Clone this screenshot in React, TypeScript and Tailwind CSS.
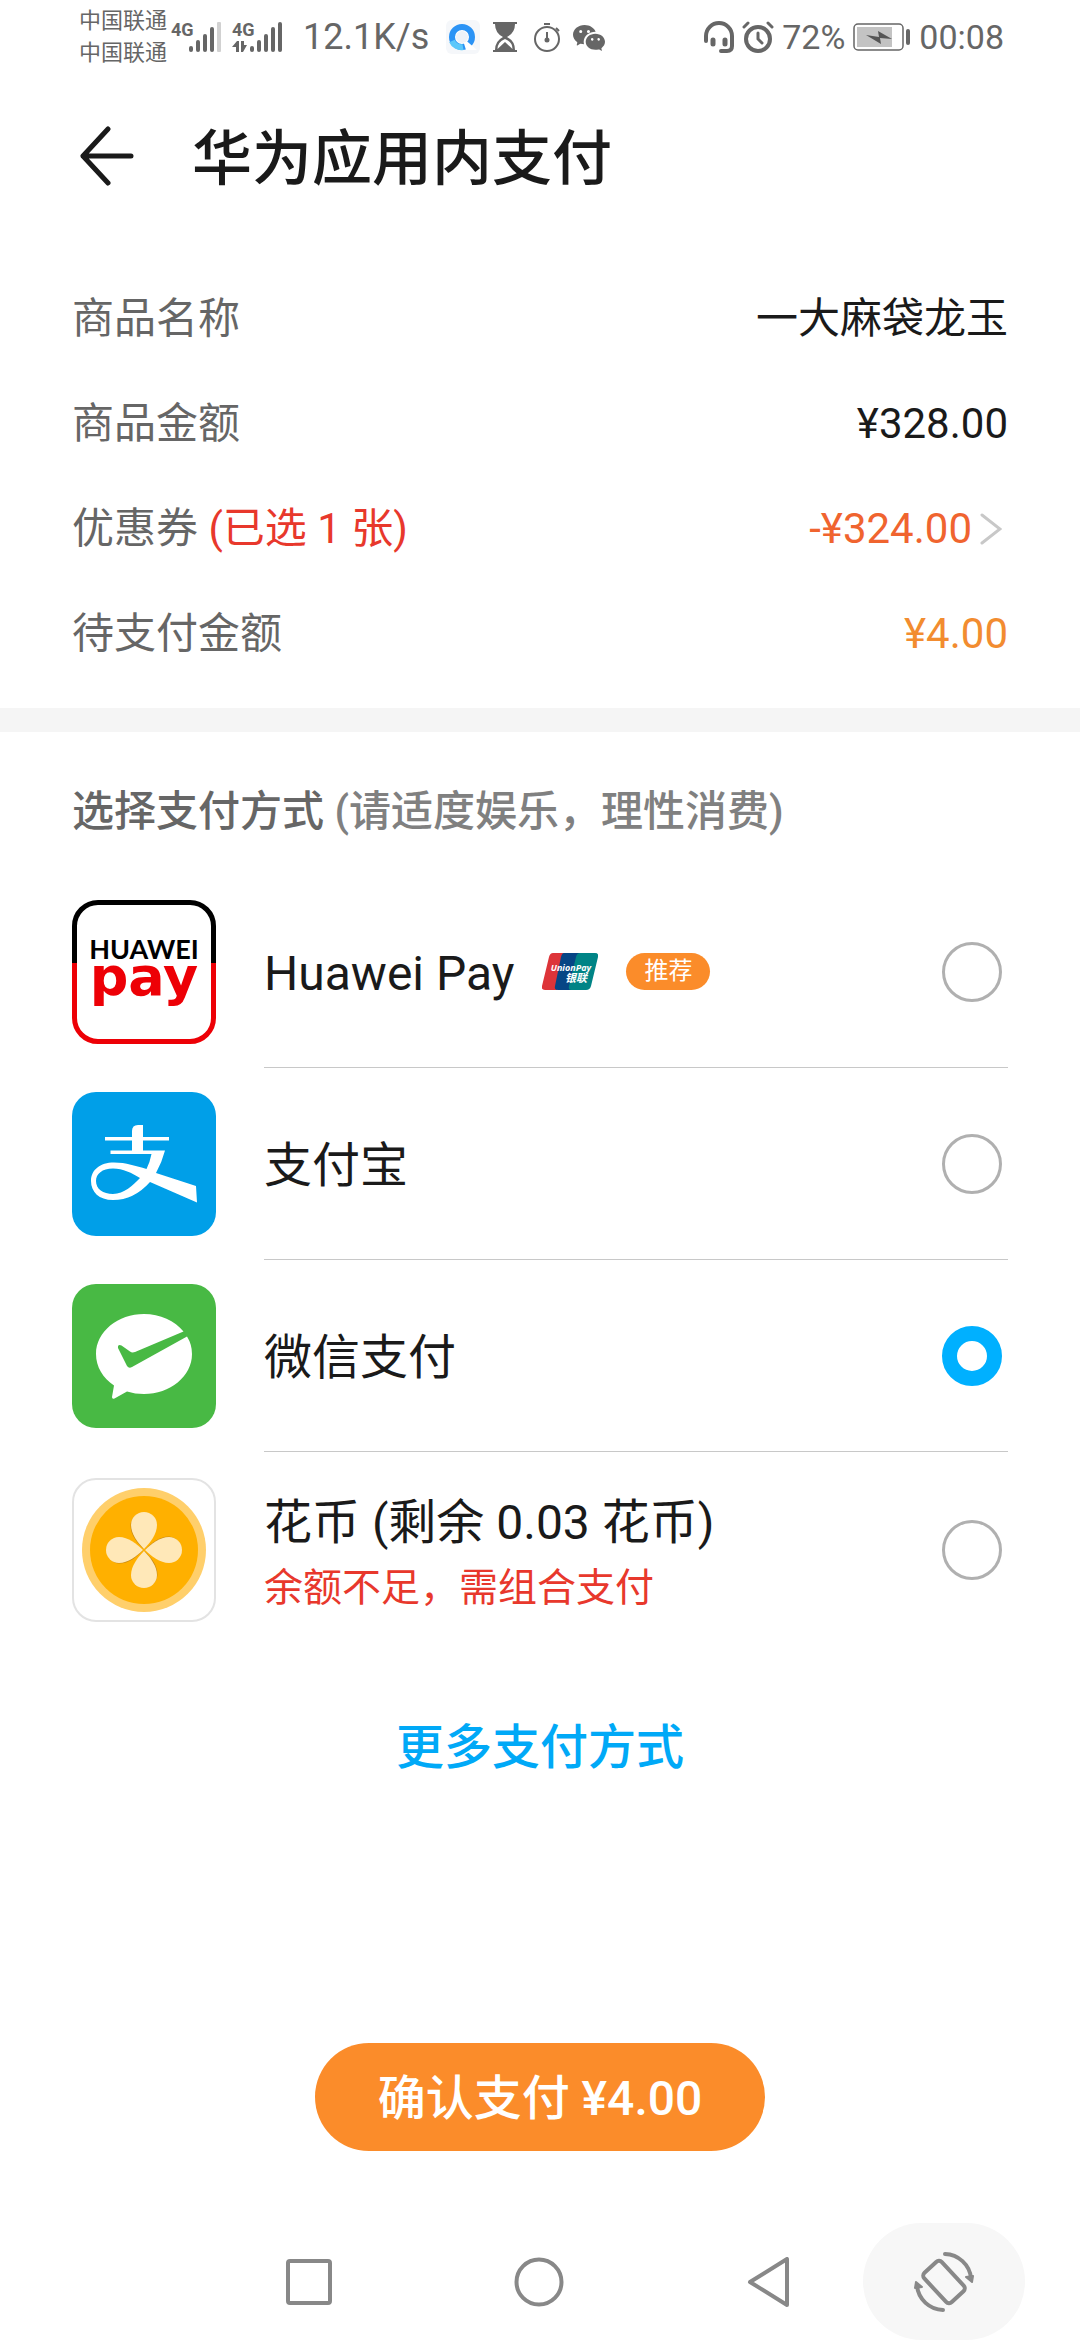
import { useState } from 'react';
import type { ReactNode } from 'react';
import { BsWechat } from 'react-icons/bs';

interface PaymentMethod {
  id: string;
  name: string;
  icon: ReactNode;
  note?: string;
  recommended?: boolean;
}

function HuaweiPayIcon() {
  return (
    <svg viewBox="0 0 144 144" className="size-36 shrink-0" aria-hidden="true">
      <path d="M2.5 63V26A23.5 23.5 0 0 1 26 2.5H118A23.5 23.5 0 0 1 141.5 26V63" fill="none" stroke="#000" strokeWidth="5" />
      <path d="M2.5 63V118A23.5 23.5 0 0 0 26 141.5H118A23.5 23.5 0 0 0 141.5 118V63" fill="none" stroke="#ed0006" strokeWidth="5" />
      <text textAnchor="middle" className="font-bold">
        <tspan x="72" y="59" className="fill-black font-['Lato',sans-serif] text-[27px]">
          HUAWEI
        </tspan>
        <tspan x="72" y="95" className="fill-[#ed0006] font-['DejaVu_Sans',sans-serif] text-[54px]">
          pay
        </tspan>
      </text>
    </svg>
  );
}

function AlipayIcon() {
  return (
    <svg viewBox="0 0 144 144" className="size-36 shrink-0" aria-hidden="true">
      <rect width="144" height="144" rx="24" fill="#009fe8" />
      <g fill="#fff">
        <path d="M60 59V39Q60 33 66 33H71V59Z" />
        <path d="M33 45H97V48.5H33Z" />
        <path d="M38.5 58.5H93Q90 70 84 81L124 94L125 110.500L78 90Q62 108 41 108C27 108 19 100 19 89C19 78 28 70.5 42 70.5C54 70.5 64 74 74.5 77Q78 70 79.5 62H38.5ZM68 86C60 81 51 76.5 41 76.5C30 76.5 24 82 24 89C24 97 31 102 41 102C52 102 61 93 68 86Z" fillRule="evenodd" />
      </g>
    </svg>
  );
}

function WechatPayIcon() {
  return (
    <svg viewBox="0 0 144 144" className="size-36 shrink-0" aria-hidden="true">
      <rect width="144" height="144" rx="24" fill="#48b944" />
      <path
        d="M72 30C46 30 24 47.5 24 70C24 83 31 94 42 101.5L40 113Q40 115.5 42.5 114.5L55 107.5Q63 110 72 110C98 110 120 92.5 120 70Q120 60.5 115 52.5L60 83Q57 85 55 82L46 64Q45.5 60 49.5 61.5L58 67.5Q60 69 63 68L111.5 47.5C103 37 88 30 72 30Z"
        fill="#fff"
      />
    </svg>
  );
}

function HuabiIcon() {
  return (
    <svg viewBox="0 0 144 144" className="size-36 shrink-0" aria-hidden="true">
      <rect x="1" y="1" width="142" height="142" rx="23" fill="#fff" stroke="#e3e3e3" strokeWidth="2" />
      <circle cx="72" cy="72" r="62" fill="#ffcf6b" />
      <circle cx="72" cy="72" r="54" fill="#ffb000" />
      {[0, 90, 180, 270].map((angle) => (
        <g key={angle} transform={`rotate(${angle} 72 72)`}>
          <path d="M72 71C65 65 58.500 57 58.500 47A13.500 13 0 0 1 72 35" fill="#c78a14" />
          <path d="M72 71C66 65 59 56 59 47A13 13 0 0 1 85 47C85 56 78 65 72 71Z" fill="#ffe8b8" />
        </g>
      ))}
    </svg>
  );
}

function UnionPayIcon() {
  return (
    <svg viewBox="0 0 56 37" className="h-[37px] w-14" role="img" aria-label="UnionPay">
      <path d="M11 0H24L15 37H3Q-1 37 0 33L7 4Q8 0 11 0Z" fill="#dd3439" />
      <path d="M22 0H38L29 37H16Q12 37 13 33L19 4Q20 0 22 0Z" fill="#064585" />
      <path d="M38 0H53Q57 0 56 4L49 33Q48 37 44 37H29Q26 37 27 33L34 4Q35 0 38 0Z" fill="#008486" />
      <text textAnchor="middle" className="fill-white font-bold italic">
        <tspan x="29" y="18" className="font-['Open_Sans',sans-serif] text-[9px]">
          UnionPay
        </tspan>
        <tspan x="34" y="29" className="font-['Noto_Sans_CJK_SC',sans-serif] text-[11px]">
          银联
        </tspan>
      </text>
    </svg>
  );
}

const methods: PaymentMethod[] = [
  { id: 'huawei', name: 'Huawei Pay', icon: <HuaweiPayIcon />, recommended: true },
  { id: 'alipay', name: '支付宝', icon: <AlipayIcon /> },
  { id: 'wechat', name: '微信支付', icon: <WechatPayIcon /> },
  { id: 'huabi', name: '花币 (剩余 0.03 花币)', icon: <HuabiIcon />, note: '余额不足，需组合支付' },
];

function StatusBar() {
  return (
    <div className="flex h-[74px] items-center justify-between pr-[76px] pl-[79px] text-[#666]">
      <div className="flex items-center">
        <div className="text-[22px] leading-8">
          <p>中国联通</p>
          <p>中国联通</p>
        </div>
        <svg viewBox="0 0 114 36" className="ml-1 h-9 w-[114px]" fill="currentColor" aria-hidden="true">
          <text x="0" y="17" className="font-['Liberation_Sans_Narrow','Roboto',sans-serif] text-[18px] font-bold">4G</text>
          <rect x="18" y="27" width="4" height="6" rx="2" />
          <rect x="25" y="21" width="4" height="12" rx="2" />
          <rect x="32" y="15" width="4" height="18" rx="2" />
          <rect x="39" y="8" width="4" height="25" rx="2" />
          <rect x="46" y="3" width="4" height="30" rx="1" opacity="0.3" />
          <text x="61" y="17" className="font-['Liberation_Sans_Narrow','Roboto',sans-serif] text-[18px] font-bold">4G</text>
          <path d="M61 28L66 22H68V33H65V28ZM70 22H73V26H76L72 33H70Z" />
          <rect x="79" y="27" width="4" height="6" rx="2" />
          <rect x="86" y="21" width="4" height="12" rx="2" />
          <rect x="93" y="15" width="4" height="18" rx="2" />
          <rect x="100" y="8" width="4" height="25" rx="2" />
          <rect x="107" y="3" width="4" height="30" rx="2" />
        </svg>
        <span className="ml-[18px] text-[36px] leading-none">12.1K/s</span>
        <svg viewBox="0 0 36 36" className="ml-4 size-9" aria-hidden="true">
          <rect x="1" y="1" width="34" height="34" rx="6" fill="#f5f7fa" />
          <circle cx="17" cy="18" r="10" fill="#fff" stroke="#2b93f5" strokeWidth="6" />
          <path d="M7 22A10 10 0 0 0 18 28" fill="none" stroke="#5cc8fa" strokeWidth="6" />
          <path d="M17 18L32 31H21Z" fill="#fff" />
          <circle cx="17" cy="18" r="6" fill="#eef2f8" />
        </svg>
        <svg viewBox="0 0 24 32" className="ml-3 h-8 w-6" fill="currentColor" aria-hidden="true">
          <path d="M0 1H24V3H22Q22 12 14 16Q22 20 22 29H24V31H0V29H2Q2 20 10 16Q2 12 2 3H0ZM12 18Q4.5 21 4.5 28L12 21L19.5 28Q19.5 21 12 18Z" fillRule="evenodd" />
        </svg>
        <svg viewBox="0 0 28 32" className="ml-4 h-8 w-7" fill="none" stroke="currentColor" strokeWidth="2" aria-hidden="true">
          <circle cx="14" cy="18" r="12" />
          <path d="M11 3H17M23 7L26 10M14 11V18" />
          <circle cx="14" cy="19" r="1.5" fill="currentColor" />
        </svg>
        <BsWechat className="ml-3 size-8" aria-hidden="true" />
      </div>
      <div className="flex items-center">
        <svg viewBox="0 0 30 32" className="h-8 w-[30px]" fill="none" stroke="currentColor" strokeWidth="4" strokeLinecap="round" aria-hidden="true">
          <path d="M2 20V15A13 13 0 0 1 28 15V25Q28 30 23 30H17" />
          <path d="M9 19V23M21 19V23" strokeWidth="5" />
        </svg>
        <svg viewBox="0 0 32 32" className="ml-2 h-8 w-8" fill="none" stroke="currentColor" strokeWidth="4" strokeLinecap="round" aria-hidden="true">
          <circle cx="16" cy="18" r="12" />
          <path d="M16 12V18L20 22M2 6L6 2M26 2L30 6" strokeWidth="3" />
        </svg>
        <span className="ml-2 text-[34px] leading-none">72%</span>
        <svg viewBox="0 0 58 28" className="ml-2 h-7 w-[58px]" aria-hidden="true">
          <rect x="1" y="1" width="49" height="26" rx="4" fill="none" stroke="currentColor" strokeWidth="1.5" />
          <rect x="4" y="4" width="35" height="20" fill="#c3c3c3" />
          <path d="M13 12L26 14L25 8L39 16L27 15L28 21Z" fill="#555" />
          <rect x="53" y="6" width="4" height="16" rx="2" fill="currentColor" />
        </svg>
        <span className="ml-2 text-[34px] leading-none">00:08</span>
      </div>
    </div>
  );
}

function OrderSummary() {
  return (
    <dl className="px-[72px] pt-6 pb-[22px] text-[42px] text-[#1a1a1a]">
      <div className="flex h-[105px] items-center justify-between">
        <dt className="text-[#666]">商品名称</dt>
        <dd>一大麻袋龙玉</dd>
      </div>
      <div className="flex h-[105px] items-center justify-between">
        <dt className="text-[#666]">商品金额</dt>
        <dd>¥328.00</dd>
      </div>
      <div className="flex h-[105px] items-center justify-between">
        <dt className="text-[#666]">
          优惠券 <span className="text-[#e8382c]">(已选 1 张)</span>
        </dt>
        <dd>
          <button type="button" className="flex items-center gap-2 pr-[6px] text-[#f0642f]">
            -¥324.00
            <svg viewBox="0 0 22 32" className="h-8 w-[22px]" fill="none" stroke="#c8c8c8" strokeWidth="3" strokeLinecap="round" aria-hidden="true">
              <path d="M2 2L20 16L2 30" />
            </svg>
          </button>
        </dd>
      </div>
      <div className="flex h-[105px] items-center justify-between">
        <dt className="text-[#666]">待支付金额</dt>
        <dd className="text-[#f28c30]">¥4.00</dd>
      </div>
    </dl>
  );
}

interface MethodRowProps {
  method: PaymentMethod;
  checked: boolean;
  onSelect: () => void;
}

function MethodRow({ method, checked, onSelect }: MethodRowProps) {
  return (
    <label className="group flex h-48 items-center gap-12 last:h-[196px]">
      {method.icon}
      <span className="flex h-full flex-1 items-center justify-between border-b border-[#c8c8c8] pr-[6px] group-last:border-b-0">
        <span className="flex items-center">
          <span className="pt-1">
            <span className="block text-[48px] leading-[72px] text-[#1a1a1a]">{method.name}</span>
            {method.note && <span className="block text-[39px] leading-[58px] text-[#e8382c]">{method.note}</span>}
          </span>
          {method.recommended && (
            <span className="ml-7 flex items-center gap-7">
              <UnionPayIcon />
              <span className="rounded-full bg-[#fb8c2a] px-[18px] text-[24px] leading-[37px] text-white">推荐</span>
            </span>
          )}
        </span>
        <input
          type="radio"
          name="method"
          value={method.id}
          checked={checked}
          onChange={onSelect}
          className="size-[60px] appearance-none rounded-full border-[3px] border-[#b0b0b0] bg-white checked:border-[15px] checked:border-[#00b0ff]"
        />
      </span>
    </label>
  );
}

function NavigationBar() {
  return (
    <nav className="flex h-[117px] items-center justify-end pr-[55px] text-[#888]">
      <div className="flex gap-[130px]">
        <button type="button" aria-label="最近任务" className="flex h-[100px] w-[100px] items-center justify-center">
          <svg viewBox="0 0 50 50" className="size-[50px]" fill="none" stroke="currentColor" strokeWidth="4">
            <rect x="4" y="4" width="42" height="42" rx="2" />
          </svg>
        </button>
        <button type="button" aria-label="主页" className="flex h-[100px] w-[100px] items-center justify-center">
          <svg viewBox="0 0 50 50" className="size-[50px]" fill="none" stroke="currentColor" strokeWidth="4">
            <circle cx="25" cy="25" r="22.5" />
          </svg>
        </button>
        <button type="button" aria-label="返回" className="flex h-[100px] w-[100px] items-center justify-center">
          <svg viewBox="0 0 50 50" className="size-[50px]" fill="none" stroke="currentColor" strokeWidth="4" strokeLinejoin="round">
            <path d="M6 25L43 2V48Z" />
          </svg>
        </button>
      </div>
      <button type="button" aria-label="旋转屏幕" className="ml-11 flex h-[117px] w-[162px] items-center justify-center rounded-full bg-[#f7f7f7]">
        <svg viewBox="0 0 62 62" className="size-[62px]" fill="none" stroke="currentColor" strokeWidth="4" strokeLinecap="round" strokeLinejoin="round">
          <rect x="11" y="19" width="40" height="24" rx="4" transform="rotate(47 31 31)" />
          <path d="M32 3A27 27 0 0 1 58 27M30 59A27 27 0 0 1 4 35" />
          <path d="M53 26L59 31L60 25ZM9 36L3 31L2 37Z" fill="currentColor" strokeWidth="2" />
        </svg>
      </button>
    </nav>
  );
}

export default function App() {
  const [selected, setSelected] = useState('wechat');

  return (
    <div lang="zh-CN" className="flex min-h-screen flex-col bg-white font-['Roboto','Noto_Sans_CJK_SC',sans-serif]">
      <StatusBar />
      <header className="flex h-[168px] items-center gap-[58px] px-20 pb-1">
        <button type="button" aria-label="返回">
          <svg viewBox="0 0 54 62" className="h-[62px] w-[54px]" fill="none" stroke="#1a1a1a" strokeWidth="5" strokeLinecap="round" strokeLinejoin="round">
            <path d="M51 31H3M28 4L3 31L28 58" />
          </svg>
        </button>
        <h1 className="pt-2 text-[60px] leading-[88px] font-medium text-[#1a1a1a]">华为应用内支付</h1>
      </header>
      <main className="flex grow flex-col">
        <OrderSummary />
        <div className="h-6 bg-[#f5f5f5]" />
        <fieldset className="px-[72px]">
          <legend className="flex h-36 items-center pt-[14px] text-[42px] font-medium text-[#666]">
            选择支付方式&nbsp;<span className="text-[#808080]">(请适度娱乐，理性消费)</span>
          </legend>
          <div>
            {methods.map((method) => (
              <MethodRow key={method.id} method={method} checked={selected === method.id} onSelect={() => setSelected(method.id)} />
            ))}
          </div>
        </fieldset>
        <button type="button" className="mt-[52px] h-24 self-center text-[48px] font-medium text-[#00a9f7]">
          更多支付方式
        </button>
        <button type="button" className="mt-auto mb-[72px] h-[108px] w-[450px] self-center rounded-full bg-[#fb8c2a] pt-1 text-[48px] font-medium text-white">
          确认支付 ¥4.00
        </button>
      </main>
      <NavigationBar />
    </div>
  );
}
